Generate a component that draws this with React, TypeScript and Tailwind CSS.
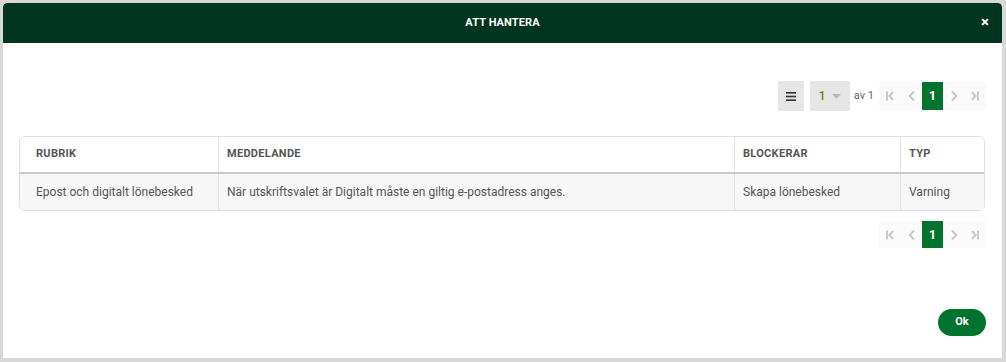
import React from 'react';

const FONT = { fontFamily: 'Roboto, "Noto Sans", sans-serif' };

function PagerIcon({ kind }: { kind: 'first' | 'prev' | 'next' | 'last' }) {
  return (
    <svg width="10" height="12" viewBox="0 0 10 12" fill="none" stroke="#c9c9c9" strokeWidth="2">
      {kind === 'first' && (
        <>
          <line x1="2" y1="1.5" x2="2" y2="10.5" />
          <path d="M8 2 L4.5 6 L8 10" />
        </>
      )}
      {kind === 'prev' && <path d="M7 1.5 L2.8 6 L7 10.5" />}
      {kind === 'next' && <path d="M3 1.5 L7.2 6 L3 10.5" />}
      {kind === 'last' && (
        <>
          <path d="M2 2 L5.5 6 L2 10" />
          <line x1="8" y1="1.5" x2="8" y2="10.5" />
        </>
      )}
    </svg>
  );
}

function Pager({ tall }: { tall?: boolean }) {
  const h = tall ? 'h-[28px]' : 'h-[27px]';
  return (
    <div className={`flex items-center bg-[#fafafa] ${h}`}>
      <div className="w-[22px] flex justify-center"><PagerIcon kind="first" /></div>
      <div className="w-[21px] flex justify-center"><PagerIcon kind="prev" /></div>
      <div className={`w-[21px] ${h} bg-[#00732e] text-white font-bold text-[13px] flex items-center justify-center`}>1</div>
      <div className="w-[21px] flex justify-center"><PagerIcon kind="next" /></div>
      <div className="w-[22px] flex justify-center"><PagerIcon kind="last" /></div>
    </div>
  );
}

const rows = [
  {
    rubrik: 'Epost och digitalt lönebesked',
    meddelande: 'När utskriftsvalet är Digitalt måste en giltig e-postadress anges.',
    blockerar: 'Skapa lönebesked',
    typ: 'Varning',
  },
];

export default function App() {
  return (
    <div className="w-[1006px] h-[362px] bg-[#d8d8d8] pt-[3px] pl-[3px]" style={FONT}>
      <div className="w-[999px] h-[355px] bg-white rounded-t-[4px] flex flex-col overflow-hidden">
        <div className="h-[40px] bg-[#00351f] rounded-t-[4px] flex items-center relative">
          <div className="flex-1 text-center text-white font-bold text-[11px] tracking-[0.1px]">ATT HANTERA</div>
          <div className="absolute right-[13px] top-[12px] text-white font-bold text-[15px] leading-none">×</div>
        </div>

        <div className="flex flex-col pl-[16px] pr-[16px]">
          <div className="flex items-center justify-end mt-[38px]">
            <div className="w-[26px] h-[30px] bg-[#e6e6e6] flex items-center justify-center">
              <svg width="10" height="9" viewBox="0 0 10 9" fill="#333">
                <rect x="0" y="0" width="10" height="1.6" />
                <rect x="0" y="3.7" width="10" height="1.6" />
                <rect x="0" y="7.4" width="10" height="1.6" />
              </svg>
            </div>
            <div className="ml-[6px] w-[40px] h-[30px] bg-[#e6e6e6] flex items-center pl-[9px] gap-[6px]">
              <span className="text-[12px] text-[#8c7600] font-medium">1</span>
              <svg width="9" height="5" viewBox="0 0 9 5" fill="#b8b8b8"><path d="M0 0 L9 0 L4.5 5 Z" /></svg>
            </div>
            <span className="ml-[4px] mr-[5px] text-[11px] text-[#666]">av 1</span>
            <Pager tall />
          </div>

          <div className="mt-[25px] mr-[1px] border border-[#e0e0e0] rounded-[6px] overflow-hidden">
            <div className="flex h-[37px] border-b-2 border-[#c8c8c8] text-[11px] font-bold text-[#555] tracking-[0.3px]">
              <div className="w-[199px] px-[16px] flex items-center border-r border-[#e2e2e2]">RUBRIK</div>
              <div className="w-[516px] px-[8px] flex items-center border-r border-[#e2e2e2]">MEDDELANDE</div>
              <div className="w-[166px] px-[8px] flex items-center border-r border-[#e2e2e2]">BLOCKERAR</div>
              <div className="flex-1 px-[8px] flex items-center">TYP</div>
            </div>
            {rows.map((r, i) => (
              <div key={i} className="flex h-[36px] bg-[#f7f7f7] text-[12px] text-[#555]">
                <div className="w-[199px] px-[16px] flex items-center border-r border-[#e2e2e2]">{r.rubrik}</div>
                <div className="w-[516px] px-[8px] flex items-center border-r border-[#e2e2e2]">{r.meddelande}</div>
                <div className="w-[166px] px-[8px] flex items-center border-r border-[#e2e2e2]">{r.blockerar}</div>
                <div className="flex-1 px-[8px] flex items-center">{r.typ}</div>
              </div>
            ))}
          </div>

          <div className="flex justify-end mt-[10px]">
            <Pager />
          </div>

          <div className="flex justify-end mt-[61px]">
            <button className="w-[48px] h-[27px] rounded-full bg-[#00732e] text-white font-bold text-[11px]">Ok</button>
          </div>
        </div>
      </div>
    </div>
  );
}
